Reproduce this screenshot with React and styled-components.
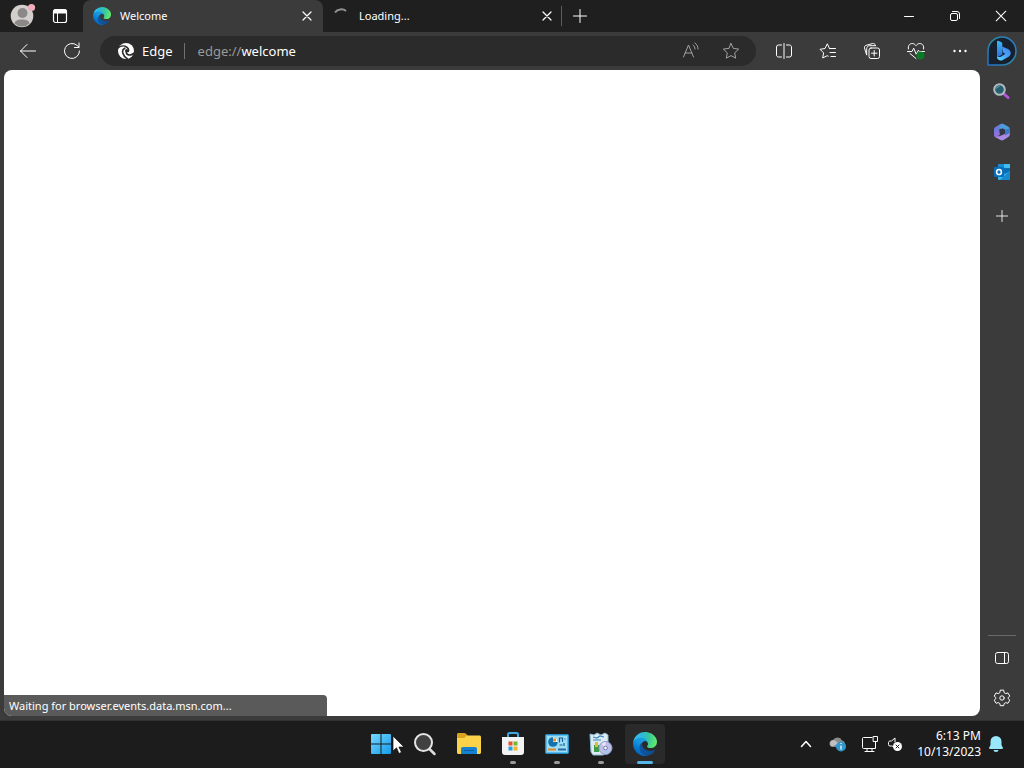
import React, { useId } from "react";
import styled, { createGlobalStyle, css } from "styled-components";

const GlobalStyle = createGlobalStyle`
  * { box-sizing: border-box; }
  html, body, #root { height: 100%; }
  body {
    margin: 0;
    overflow: hidden;
    background: #3b3b3b;
    color: #fff;
    font: 11px/16px "Segoe UI", "Noto Sans", "Open Sans", sans-serif;
  }
  button, input { font: inherit; color: inherit; }
  svg { display: block; }
`;

const Desktop = styled.div`
  display: flex;
  flex-direction: column;
  height: 100vh;
`;

const BrowserWindow = styled.div`
  display: flex;
  flex: 1;
  flex-direction: column;
  min-height: 0;
`;

const plainButton = css`
  display: flex;
  align-items: center;
  justify-content: center;
  padding: 0;
  border: 0;
  background: none;
`;

const TabStrip = styled.header`
  display: flex;
  height: 32px;
  background: #1f1f1f;
`;

const StripButton = styled.button`
  ${plainButton}
  width: ${(p) => p.$width}px;
  height: 32px;
`;

const StripStart = styled.div`
  display: flex;
  width: 83px;
  padding-left: 3px;
`;

const Tabs = styled.div`
  display: flex;
`;

const Tab = styled.div`
  display: flex;
  align-items: center;
  width: 240px;
  padding: 0 6px 0 10px;
  border-radius: 8px 8px 0 0;
  background: ${(p) => (p.$active ? "#3b3b3b" : "transparent")};
`;

const TabTitle = styled.button`
  ${plainButton}
  flex: 1;
  justify-content: flex-start;
  gap: 9px;
  height: 32px;
`;

const TabClose = styled.button`
  ${plainButton}
  width: 20px;
  height: 20px;
`;

const StripDivider = styled.span`
  align-self: center;
  width: 1px;
  height: 20px;
  margin-left: -2px;
  background: #5c5c5c;
`;

const WindowControls = styled.div`
  display: flex;
  margin-left: auto;
`;

const Toolbar = styled.nav`
  display: flex;
  align-items: center;
  height: 38px;
  padding: 0 2px 0 6px;
  background: #3b3b3b;
`;

const ToolButton = styled.button`
  ${plainButton}
  width: 44px;
  height: 32px;
`;

const BingButton = styled.button`
  ${plainButton}
  width: 40px;
  height: 32px;
`;

const AddressBar = styled.div`
  display: flex;
  flex: 1;
  align-items: center;
  height: 30px;
  margin: 0 6px;
  padding: 0 5px 0 18px;
  border-radius: 15px;
  background: #2b2b2b;
  font-size: 13px;
  line-height: 20px;
`;

const SiteInfo = styled.button`
  ${plainButton}
  gap: 8px;
`;

const AddressDivider = styled.span`
  width: 1px;
  height: 16px;
  margin: 0 13px 0 11px;
  background: #707070;
`;

const Scheme = styled.label`
  color: #9a9a9a;
`;

const UrlInput = styled.input`
  flex: 1;
  min-width: 0;
  padding: 0;
  border: 0;
  outline: 0;
  background: none;
`;

const AddressAction = styled.button`
  ${plainButton}
  width: 40px;
  height: 28px;
  color: #a2a2a2;
`;

const Workspace = styled.div`
  display: flex;
  flex: 1;
  min-height: 0;
`;

const Page = styled.main`
  display: flex;
  flex: 1;
  align-items: flex-end;
  margin: 0 0 4px 4px;
  overflow: hidden;
  border-radius: 8px;
  background: #fff;
`;

const StatusBubble = styled.div`
  width: 323px;
  padding: 3px 5px 2px;
  border-radius: 0 4px 0 0;
  background: #5a5a5a;
`;

const Sidebar = styled.aside`
  display: flex;
  flex-direction: column;
  align-items: center;
  justify-content: space-between;
  width: 44px;
  padding: 2px 0;
`;

const SidebarApps = styled.div`
  display: flex;
  flex-direction: column;
`;

const SideButton = styled.button`
  ${plainButton}
  width: 40px;
  height: 40px;
`;

const AddSideButton = styled(SideButton)`
  margin-top: 4px;
`;

const SidebarEnd = styled.div`
  display: flex;
  flex-direction: column;
  align-items: center;
  width: 28px;
  padding-top: 2px;
  border-top: 1px solid #6a6a6a;
`;

const Taskbar = styled.footer`
  display: grid;
  grid-template-columns: 1fr auto 1fr;
  height: 48px;
  border-top: 1px solid #333;
  background: #1c1c1c;
`;

const AppList = styled.div`
  display: flex;
  grid-column: 2;
  gap: 4px;
  padding: 3px 0 4px 2px;
`;

const AppButton = styled.button`
  ${plainButton}
  position: relative;
  width: 40px;
  border-radius: 4px;
  background: ${(p) => (p.$state === "active" ? "#2a2a2a" : "transparent")};

  &::after {
    content: "";
    position: absolute;
    bottom: 0;
    width: ${(p) => (p.$state === "active" ? 16 : 6)}px;
    height: 3px;
    border-radius: 2px;
    background: ${(p) => (p.$state === "active" ? "#55b7e8" : "#9a9a9a")};
    display: ${(p) => (p.$state ? "block" : "none")};
  }
`;

const Cursor = styled.svg`
  position: absolute;
  top: 11px;
  left: 31px;
  pointer-events: none;
`;

const Tray = styled.div`
  display: flex;
  align-items: center;
  justify-content: flex-end;
  padding: 0 18px 2px 0;
`;

const TrayButton = styled.button`
  ${plainButton}
  width: ${(p) => p.$width}px;
  height: 40px;
`;

const Clock = styled.button`
  ${plainButton}
  flex-direction: column;
  align-items: flex-end;
  margin: 0 5px 0 10px;
  font-size: 12px;
`;

const Line = ({ size = 20, box = 20, width = 1, children }) => (
  <svg width={size} height={size} viewBox={`0 0 ${box} ${box}`} fill="none" stroke="currentColor"
    strokeWidth={width} strokeLinecap="round" strokeLinejoin="round" aria-hidden="true">
    {children}
  </svg>
);

const CloseIcon = ({ size = 10 }) => (
  <Line size={size} box={10} width={size > 10 ? 0.9 : 1.2}><path d="m1 1 8 8M9 1 1 9" /></Line>
);

const PlusIcon = ({ size = 14 }) => (
  <Line size={size} box={14}><path d="M7 .5v13M.5 7h13" /></Line>
);

function EdgeLogo({ size }) {
  const id = useId();
  return (
    <svg width={size} height={size} viewBox="0 0 256 256" aria-hidden="true">
      <defs>
        <linearGradient id={`${id}a`} x1="60" y1="177" x2="240" y2="177" gradientUnits="userSpaceOnUse">
          <stop stopColor="#0c59a4" /><stop offset="1" stopColor="#114a8b" />
        </linearGradient>
        <linearGradient id={`${id}b`} x1="140" y1="92" x2="42" y2="220" gradientUnits="userSpaceOnUse">
          <stop stopColor="#1b9de2" /><stop offset=".4" stopColor="#1595df" /><stop offset="1" stopColor="#0067bf" />
        </linearGradient>
        <radialGradient id={`${id}c`} cx="20" cy="52" r="250" gradientUnits="userSpaceOnUse">
          <stop stopColor="#35c1f1" /><stop offset=".3" stopColor="#2cb8dc" />
          <stop offset=".6" stopColor="#36c79b" /><stop offset=".95" stopColor="#66eb6e" />
        </radialGradient>
      </defs>
      <path fill={`url(#${id}a)`} d="M231 190.5c-3.4 1.8-6.9 3.4-10.5 4.7a101.9 101.9 0 0 1-35.9 6.4c-47.3 0-88.5-32.5-88.5-74.3a31.5 31.5 0 0 1 16.4-27.3c-42.8 1.8-53.8 46.4-53.8 72.5 0 74 68.1 81.4 82.8 81.4 7.9 0 19.8-2.3 27-4.6l1.3-.4a128.3 128.3 0 0 0 66.6-52.8 4 4 0 0 0-5.4-5.6z" />
      <path fill={`url(#${id}b)`} d="M105.7 241.4a79.2 79.2 0 0 1-22.7-21.3 80.7 80.7 0 0 1 29.5-120c3.2-1.5 8.5-4.1 15.6-4a32.4 32.4 0 0 1 25.7 13 31.9 31.9 0 0 1 6.3 18.7c0-.2 24.5-79.6-80-79.6-43.9 0-80 41.6-80 78.2a130.2 130.2 0 0 0 12.1 56 128 128 0 0 0 156.4 67 75.5 75.5 0 0 1-62.8-8z" />
      <path fill={`url(#${id}c)`} d="M152.3 148.9c-.9 1-3.4 2.5-3.4 5.6 0 2.6 1.7 5.2 4.8 7.3 14.3 10 41.4 8.6 41.5 8.6a59.6 59.6 0 0 0 30.3-8.3 61.4 61.4 0 0 0 30.4-52.9c.3-22.4-8-37.3-11.3-43.9C223.5 23.9 177.7 0 128 0A128 128 0 0 0 0 126.2c.5-36.5 36.8-66 80-66 3.5 0 23.5.3 42 10 16.3 8.6 24.9 18.9 30.8 29.2 6.2 10.7 7.3 24.1 7.3 29.5 0 5.3-2.7 13.3-7.8 19.9z" />
    </svg>
  );
}

const ProfileIcon = () => (
  <svg width="26" height="26" viewBox="0 0 26 26" aria-hidden="true">
    <circle cx="12" cy="13" r="11.3" fill="#d2cfcd" />
    <circle cx="12.5" cy="10" r="5" fill="#8b8987" />
    <path d="M4.5 20.5c.7-3 3-4 7.5-4s6.8 1 7.5 4a11 11 0 0 1-15 0Z" fill="#8b8987" />
    <circle cx="21.5" cy="4.5" r="3.6" fill="#f3aebb" />
  </svg>
);

const TabActionsIcon = () => (
  <svg width="16" height="16" viewBox="0 0 16 16" fill="none" stroke="#fff" aria-hidden="true">
    <rect x="1.5" y="1.5" width="13" height="13" rx="2" strokeWidth="1.2" />
    <path d="M2 2h12v3H2z" fill="#fff" />
    <path d="M5.5 5v9" />
  </svg>
);

const SwirlIcon = () => (
  <svg width="16" height="16" viewBox="0 0 16 16" aria-hidden="true">
    <circle cx="8" cy="8" r="8" fill="#fff" />
    <g fill="none" stroke="#2b2b2b" strokeWidth="1.6" strokeLinecap="round">
      <path d="M-.5 5.2C2.6 2.600 6.600 2.400 9 4.300c1.500 1.200 1.900 2.700 1.200 4.200" />
      <path d="M6.800 5.200C4.800 6 4.300 8.200 4.900 10.200c.6 2.200 2.100 4 4.300 5.400" />
      <path d="M8.300 9.400c.1 2 2.200 2.900 4.200 2.500 1.300-.2 2.400-.8 3.200-1.500" />
    </g>
    <circle cx="8.700" cy="7.700" r="1.700" fill="#2b2b2b" />
  </svg>
);

const BingIcon = () => (
  <svg width="32" height="32" viewBox="0 0 32 32" aria-hidden="true">
    <defs>
      <linearGradient id="bingRing" x1="0" y1="1" x2="1" y2="0">
        <stop stopColor="#2671c9" /><stop offset=".5" stopColor="#2a8aa5" /><stop offset="1" stopColor="#2b79cb" />
      </linearGradient>
      <linearGradient id="bingStem" x1="0" y1="0" x2="0" y2="1">
        <stop stopColor="#3bb8f5" /><stop offset="1" stopColor="#2b6fe0" />
      </linearGradient>
      <linearGradient id="bingBowl" x1="1" y1="0" x2="0" y2="1">
        <stop stopColor="#3a7cf0" /><stop offset=".5" stopColor="#4aa4f7" /><stop offset="1" stopColor="#57dcff" />
      </linearGradient>
    </defs>
    <path d="M2 30V16A14 14 0 1 1 16 30H2Z" fill="#17212e" stroke="url(#bingRing)" strokeWidth="1.5" strokeLinejoin="round" />
    <path d="M11 6.500c0-.6.6-.9 1.100-.7l3 1.200c.8.300 1.200.9 1.200 1.700v10.800L11 22.500Z" fill="url(#bingStem)" />
    <path d="M16.200 13c-.3-.8.200-1.400 1-1.100l4.200 1.800c2 .8 3.300 2.400 3.300 4.400 0 1.600-.8 2.800-2.100 3.600L16.800 25c-2.500 1.400-5.800-.1-5.800-3v-.5c1.500 1 3 .6 4.200-.1l4.300-2.600-1.600-.8c-.6-.3-.9-.8-1.100-1.400Z" fill="url(#bingBowl)" />
  </svg>
);

const SearchColorIcon = () => (
  <svg width="20" height="20" viewBox="0 0 20 20" fill="none" aria-hidden="true">
    <path d="m11.500 11.500 4.500 4" stroke="#b455dc" strokeWidth="3" strokeLinecap="round" />
    <circle cx="7.500" cy="7.500" r="5.300" fill="#285f70" stroke="#aebcbd" strokeWidth="2" />
    <path d="M4.500 6.500a3 3 0 0 1 3-2" stroke="#66a9b4" />
  </svg>
);

const OfficeIcon = () => (
  <svg width="18" height="18" viewBox="0 0 18 18" aria-hidden="true">
    <path d="M1 6c.2-1 .7-1.600 1.500-2.100L7 1.200c1-.6 2-.7 3-.2L6.500 5.500v5L2.500 14A3 3 0 0 1 1 11.500Z" fill="#6f7bdc" />
    <path d="M8 .9c.9-.4 1.700-.3 2.500.1L15 3.500c1.200.7 1.800 1.700 1.800 3v3L12 7 6 5.500Z" fill="#4b9ede" />
    <path d="M16.800 8.500v3c0 1.200-.6 2-1.600 2.600L10.500 17c-1 .6-2 .6-3 0L3 14.500c-.7-.4-1-.8-1.400-1.500l5 .2L12 10.500Z" fill="#a98be6" />
    <path d="M1 9v2.500c0 1.300.6 2.300 1.600 3l4.400-2.700V8Z" fill="#8d72dc" />
    <path d="m12 6.500 4.800-1v4.500L12 12.500Z" fill="#3b78c9" />
    <path d="m6.500 7 3-1.700L12 6.800v3.800l-2.700 1.600-2.800-1.700Z" fill="#343845" />
  </svg>
);

const OutlookIcon = () => (
  <svg width="18" height="18" viewBox="0 0 18 18" aria-hidden="true">
    <path d="M5 1h12v13H5z" fill="#168bd4" />
    <path d="M11 1h6v4h-6z" fill="#42bdef" /><path d="M11 5h6v5h-6z" fill="#086eb3" />
    <path d="m5 9 6 3 6-4v7.500c0 .8-.5 1.500-1.300 1.500H6.300C5.500 17 5 16.500 5 15.500Z" fill="#34b7ed" />
    <path d="m17 8-10 9h8.700c.8 0 1.300-.7 1.300-1.500Z" fill="#1688cc" />
    <rect x="1" y="4" width="10" height="10" rx="1" fill="#086fbd" />
    <ellipse cx="6" cy="9" rx="2.400" ry="2.600" fill="none" stroke="#fff" strokeWidth="1.500" />
  </svg>
);

const StartIcon = () => (
  <svg width="20" height="20" viewBox="0 0 20 20" aria-hidden="true">
    <defs><linearGradient id="win" x1="0" y1="0" x2="1" y2="1"><stop stopColor="#75d8ff" /><stop offset="1" stopColor="#159be9" /></linearGradient></defs>
    <path fill="url(#win)" d="M1 0h8.500v9.500H0V1a1 1 0 0 1 1-1Zm9.500 0H19a1 1 0 0 1 1 1v8.500h-9.500ZM0 10.500h9.500V20H1a1 1 0 0 1-1-1Zm10.500 0H20V19a1 1 0 0 1-1 1h-8.500Z" />
  </svg>
);

const TaskSearchIcon = () => (
  <svg width="24" height="24" viewBox="0 0 24 24" fill="none" aria-hidden="true">
    <path d="m16.500 17 5 5" stroke="#ddd" strokeWidth="2.500" strokeLinecap="round" />
    <circle cx="10.500" cy="10.500" r="8.500" fill="#414141" stroke="#e4e4e4" strokeWidth="2" />
  </svg>
);

const FolderIcon = () => (
  <svg width="26" height="24" viewBox="0 0 26 24" aria-hidden="true">
    <path d="M1 5V2.500C1 1.700 1.700 1 2.500 1h5.700c.6 0 1 .2 1.500.6L12 4v4H1Z" fill="#dda21b" />
    <path d="M1 6h7l3-2.500h12.500c.8 0 1.500.7 1.500 1.500v15.500c0 .8-.7 1.500-1.500 1.500h-21C1.700 22 1 21.300 1 20.500Z" fill="#fbd34b" />
    <path d="M5 22v-5c0-1.200.8-2 2-2h12c1.200 0 2 .8 2 2v5Z" fill="#1681d1" />
    <path d="M8 18h10v1H8z" fill="#0b5da8" />
  </svg>
);

const StoreIcon = () => (
  <svg width="24" height="24" viewBox="0 0 24 24" aria-hidden="true">
    <path d="M7 6V2.500C7 1.700 7.700 1 8.500 1h7c.8 0 1.500.7 1.500 1.500V6" fill="none" stroke="#3ba9df" strokeWidth="2" />
    <path d="M1 5h22v15c0 2-1 3-3 3H4c-2 0-3-1-3-3Z" fill="#f2f3f3" />
    <path d="M7.500 9.500h4v4h-4z" fill="#e65330" /><path d="M12.500 9.500h4v4h-4z" fill="#78b631" />
    <path d="M7.500 14.500h4v4h-4z" fill="#2a9fe2" /><path d="M12.500 14.500h4v4h-4z" fill="#f3b427" />
  </svg>
);

const ControlPanelIcon = () => (
  <svg width="24" height="20" viewBox="0 0 24 20" aria-hidden="true">
    <rect x=".5" y=".5" width="23" height="19" rx="1" fill="#5bb9e6" stroke="#238ec9" />
    <path d="M2 2h20v16H2z" fill="#9edcf3" />
    <circle cx="8" cy="8" r="4.800" fill="#1473ad" /><path d="M8 8V3.200A4.800 4.800 0 0 1 12.800 8Z" fill="#fff" />
    <path d="M8 7.500h3V4.500H8z" fill="#eb8c27" />
    <path d="M14.500 8V4h3v3M14 8h1M17 7.500h1M19.500 5h1M19 9v3M14.500 11h3" stroke="#145e8e" strokeWidth="1.200" fill="none" />
    <path d="M3 15.500h8" stroke="#e58722" strokeWidth="2" /><path d="M13 15.500h8" stroke="#236fa4" strokeWidth="2" />
  </svg>
);

const InstallerIcon = () => (
  <svg width="24" height="24" viewBox="0 0 24 24" aria-hidden="true">
    <path d="m1 2 4 1 3-2 4 2 4-2 3 2v18l-5 2H4l-2-3Z" fill="#dcebf4" stroke="#8dbad2" />
    <path d="m4 5 4 1 3-2 4 1M4 8h8" stroke="#3b86b8" fill="none" strokeWidth="1.200" />
    <path d="M5 13h5v7H5z" fill="#3c9c48" /><path d="M6 10h3v5H6z" fill="#d5bf40" />
    <circle cx="16.500" cy="16" r="6.500" fill="#bfc0e8" stroke="#8f95cc" />
    <path d="m16.500 16-4-4a6 6 0 0 1 4-2Z" fill="#eae2f8" /><path d="m16.500 16 4 4a6 6 0 0 1-4 2Z" fill="#a3c9ea" />
    <circle cx="16.500" cy="16" r="1.800" fill="#fff" stroke="#7076ae" />
  </svg>
);

const CloudIcon = () => (
  <svg width="18" height="16" viewBox="0 0 18 16" aria-hidden="true">
    <path d="M4 11a3.500 3.500 0 0 1 0-7 5 5 0 0 1 9 .5 3.300 3.300 0 0 1 0 6.500Z" fill="#8b8b8b" />
    <path d="M3 10.500a3.400 3.400 0 0 1 1-6.400c2 .1 3 1.200 6 3.400Z" fill="#c0c0c0" />
    <circle cx="12" cy="10.500" r="5" fill="#3197cc" />
    <path d="M12 9.500v4M12 7v1" stroke="#fff" strokeWidth="1.200" />
  </svg>
);

const tasks = [
  { name: "Search", icon: <TaskSearchIcon /> },
  { name: "File Explorer", icon: <FolderIcon /> },
  { name: "Microsoft Store", icon: <StoreIcon />, state: "open" },
  { name: "Control Panel", icon: <ControlPanelIcon />, state: "open" },
  { name: "Installer", icon: <InstallerIcon />, state: "open" },
  { name: "Microsoft Edge", icon: <EdgeLogo size={24} />, state: "active" },
];

export default function App() {
  return (
    <Desktop>
      <GlobalStyle />
      <BrowserWindow>
        <TabStrip>
          <StripStart>
            <StripButton $width={40} aria-label="Profile"><ProfileIcon /></StripButton>
            <StripButton $width={34} aria-label="Tab actions"><TabActionsIcon /></StripButton>
          </StripStart>
          <Tabs>
            <Tab $active>
              <TabTitle><EdgeLogo size={18} />Welcome</TabTitle>
              <TabClose aria-label="Close Welcome"><CloseIcon /></TabClose>
            </Tab>
            <Tab>
              <TabTitle>
                <Line size={17} box={17} width={2}><g stroke="#929292"><path d="M2 4.500C4.500.8 10 .5 13 3" strokeLinecap="butt" /></g></Line>
                Loading...
              </TabTitle>
              <TabClose aria-label="Close Loading"><CloseIcon /></TabClose>
            </Tab>
          </Tabs>
          <StripDivider />
          <StripButton $width={36} aria-label="New tab"><PlusIcon /></StripButton>
          <WindowControls>
            <StripButton $width={46} aria-label="Minimize"><Line size={10} box={10}><path d="M.5 5.500h9" /></Line></StripButton>
            <StripButton $width={46} aria-label="Restore">
              <Line size={10} box={10}><rect x=".5" y="2.500" width="7" height="7" rx="1.500" /><path d="M2.500.5H7A2.500 2.500 0 0 1 9.500 3v4.500" /></Line>
            </StripButton>
            <StripButton $width={46} aria-label="Close"><CloseIcon size={12} /></StripButton>
          </WindowControls>
        </TabStrip>

        <Toolbar>
          <ToolButton aria-label="Back"><Line><path d="M17.500 10h-15M9 3.500 2.500 10 9 16.500" /></Line></ToolButton>
          <ToolButton aria-label="Refresh"><Line><path d="M17.500 10a7.500 7.500 0 1 1-2.600-5.700L17 6.200M17 2v4.500h-4.500" /></Line></ToolButton>
          <AddressBar>
            <SiteInfo><SwirlIcon />Edge</SiteInfo>
            <AddressDivider />
            <Scheme htmlFor="address">edge://</Scheme>
            <UrlInput id="address" defaultValue="welcome" spellCheck={false} />
            <AddressAction aria-label="Read aloud">
              <Line><path d="m2.500 16 5-12 5 12M4.200 12h6.600M12 4c1.300 1 2 2.400 2 4M14 2c2 1.500 3 3.700 3 6" /></Line>
            </AddressAction>
            <AddressAction aria-label="Add to favorites">
              <Line><path d="m10 2.500 2.300 4.900 5.400.7-4 3.700 1 5.400-4.700-2.600-4.700 2.600 1-5.400-4-3.700 5.400-.7Z" /></Line>
            </AddressAction>
          </AddressBar>
          <ToolButton aria-label="Split screen">
            <Line><path d="M7.500 4H4.500a2 2 0 0 0-2 2v8c0 1.100.9 2 2 2h3M12.500 4h3c1.100 0 2 .9 2 2v8a2 2 0 0 1-2 2h-3M10 2.500v15" /></Line>
          </ToolButton>
          <ToolButton aria-label="Favorites">
            <Line><path d="M11.500 7.500 9.300 2.800 7 7.500l-5 .8 3.600 3.600-.9 5.100 4.500-2.300 1 .5M11.500 7.500h6M12 11.500h5.500M13 15.500h4.500" /></Line>
          </ToolButton>
          <ToolButton aria-label="Collections">
            <Line><rect x="7" y="7" width="10.500" height="10.500" rx="2" /><path d="M12.200 9.500v5.500M9.500 12.200H15M4.500 13.500 2.500 7C2.200 5.800 2.800 4.800 3.900 4.400l6.800-1.900c1.100-.3 2.100.3 2.400 1.400l.2.800M4.700 13.800V7.700c0-1.700 1.300-3 3-3h5.600" /></Line>
          </ToolButton>
          <ToolButton aria-label="Browser essentials">
            <Line>
              <path d="M2.500 8C1.500 4.500 4 2.500 6.200 2.500c1.600 0 2.800.8 3.800 2.200 1-1.400 2.200-2.200 3.800-2.200 2.200 0 4.700 2 3.700 5.500M1.500 10.500H6l1.700-3.300 2.500 6 2.200-4 1 1.300h5M4 12.500l6 5" />
              <circle cx="14.500" cy="14.500" r="4" fill="#087b24" stroke="none" />
            </Line>
          </ToolButton>
          <ToolButton aria-label="Settings and more">
            <Line><g fill="currentColor" stroke="none"><circle cx="4.500" cy="10" r="1.200" /><circle cx="10" cy="10" r="1.200" /><circle cx="15.500" cy="10" r="1.200" /></g></Line>
          </ToolButton>
          <BingButton aria-label="Bing Chat"><BingIcon /></BingButton>
        </Toolbar>

        <Workspace>
          <Page>
            <StatusBubble role="status">Waiting for browser.events.data.msn.com...</StatusBubble>
          </Page>
          <Sidebar>
            <SidebarApps>
              <SideButton aria-label="Search"><SearchColorIcon /></SideButton>
              <SideButton aria-label="Microsoft 365"><OfficeIcon /></SideButton>
              <SideButton aria-label="Outlook"><OutlookIcon /></SideButton>
              <AddSideButton aria-label="Customize"><PlusIcon size={12} /></AddSideButton>
            </SidebarApps>
            <SidebarEnd>
              <SideButton aria-label="Hide sidebar">
                <Line size={16} box={16}><rect x="1.500" y="2.500" width="13" height="11" rx="2" /><path d="M10.500 2.500v11" /></Line>
              </SideButton>
              <SideButton aria-label="Settings">
                <Line><path d="m8.300 2.500-.5 2.200-1.600.9-2.100-.7-1.900 3.200 1.700 1.500v1l-1.700 1.500 1.900 3.200 2.100-.7 1.600.9.500 2.200h3.400l.5-2.200 1.600-.9 2.100.7 1.900-3.200-1.700-1.500v-1l1.700-1.500-1.900-3.200-2.100.7-1.600-.9-.5-2.200Z" /><circle cx="10" cy="10" r="2.200" /></Line>
              </SideButton>
            </SidebarEnd>
          </Sidebar>
        </Workspace>
      </BrowserWindow>

      <Taskbar>
        <AppList>
          <AppButton aria-label="Start">
            <StartIcon />
            <Cursor width="13" height="20" viewBox="0 0 13 20" aria-hidden="true">
              <path d="M1 1v15l3.500-3.200L7 18.500l2.500-1.200-2.600-5.300H12Z" fill="#fff" stroke="#111" strokeWidth=".7" />
            </Cursor>
          </AppButton>
          {tasks.map((task) => (
            <AppButton key={task.name} aria-label={task.name} $state={task.state}>{task.icon}</AppButton>
          ))}
        </AppList>
        <Tray>
          <TrayButton $width={26} aria-label="Show hidden icons"><Line size={12} box={12} width={1.5}><path d="m1.500 8.500 4.500-5 4.500 5" /></Line></TrayButton>
          <TrayButton $width={38} aria-label="OneDrive"><CloudIcon /></TrayButton>
          <TrayButton $width={26} aria-label="Network">
            <Line size={18} box={18}><path d="M11 2.500H2.500a1 1 0 0 0-1 1v9c0 .6.400 1 1 1h12V8.500M6 13.500v3M11 13.500v3M4 16.500h9M12.500 1.500h4v5h-4zM14.500 6.500v2" /></Line>
          </TrayButton>
          <TrayButton $width={24} aria-label="Sound, muted">
            <Line size={16} box={16}>
              <path d="M7 10.500 4.500 10H3a1.500 1.500 0 0 1-1.500-1.500v-2C1.500 5.700 2.200 5 3 5h1.500L8 2v4" />
              <circle cx="10.500" cy="10.500" r="4.500" fill="#fff" stroke="none" />
              <path d="m9 9 3 3M12 9l-3 3" stroke="#1c1c1c" />
            </Line>
          </TrayButton>
          <Clock><span>6:13 PM</span><span>10/13/2023</span></Clock>
          <TrayButton $width={20} aria-label="Notifications">
            <svg width="16" height="18" viewBox="0 0 16 18" fill="#98e7fb" aria-hidden="true">
              <path d="M8 1a5.500 5.500 0 0 1 5.500 5.500V10l1.400 2.800c.2.500-.1 1.200-.8 1.200H1.900c-.7 0-1-.7-.8-1.200L2.500 10V6.500A5.500 5.500 0 0 1 8 1ZM5.500 15h5a2.500 2 0 0 1-5 0Z" />
            </svg>
          </TrayButton>
        </Tray>
      </Taskbar>
    </Desktop>
  );
}
